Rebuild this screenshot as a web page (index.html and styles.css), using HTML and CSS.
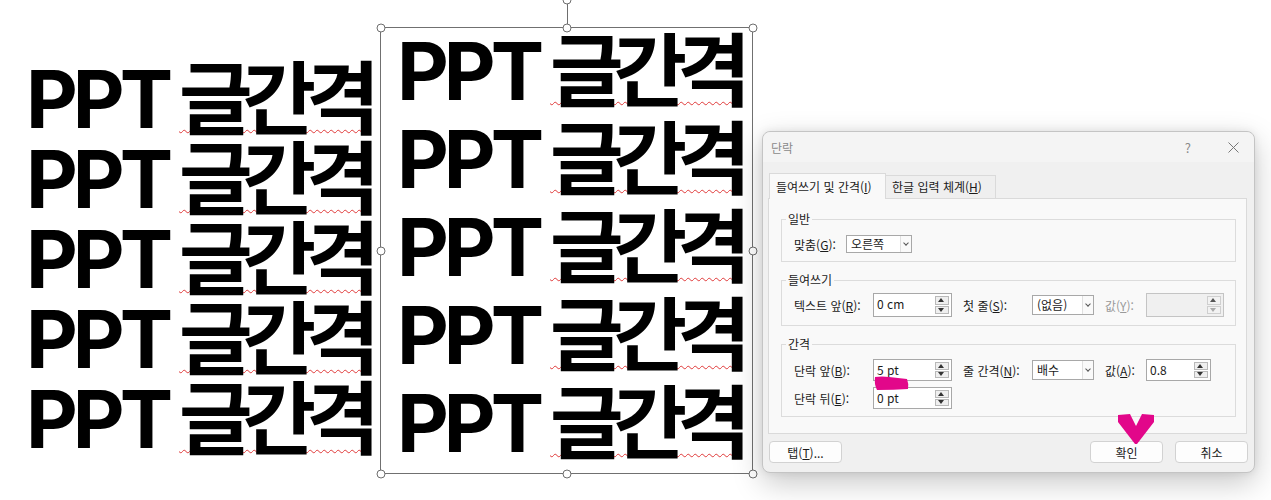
FILE: index.html
```html
<!DOCTYPE html>
<html lang="ko">
<head>
    <meta charset="UTF-8">
    <title>PPT 글간격</title>
    <link rel="stylesheet" href="styles.css">
</head>
<body>
    <div class="stage">
        <!-- plain text on the slide -->
        <div class="lines lines-plain">
            <p class="line">PPT <span class="spell">글간격</span></p>
            <p class="line">PPT <span class="spell">글간격</span></p>
            <p class="line">PPT <span class="spell">글간격</span></p>
            <p class="line">PPT <span class="spell">글간격</span></p>
            <p class="line">PPT <span class="spell">글간격</span></p>
        </div>

        <!-- selected text box -->
        <div class="textbox">
            <div class="lines lines-box">
                <p class="line">PPT <span class="spell">글간격</span></p>
                <p class="line">PPT <span class="spell">글간격</span></p>
                <p class="line">PPT <span class="spell">글간격</span></p>
                <p class="line">PPT <span class="spell">글간격</span></p>
                <p class="line">PPT <span class="spell">글간격</span></p>
            </div>
            <span class="rotate-line"></span>
            <span class="handle h-rot"></span>
            <span class="handle h-tl"></span>
            <span class="handle h-tc"></span>
            <span class="handle h-tr"></span>
            <span class="handle h-ml"></span>
            <span class="handle h-mr"></span>
            <span class="handle h-bl"></span>
            <span class="handle h-bc"></span>
            <span class="handle h-br"></span>
        </div>

        <!-- paragraph dialog -->
        <div class="dialog">
            <div class="titlebar">
                <span class="title">단락</span>
                <span class="help">?</span>
                <svg class="close" width="11" height="11" viewBox="0 0 11 11">
                    <path d="M0.5 0.5 L10.5 10.5 M10.5 0.5 L0.5 10.5" stroke="#777" stroke-width="1" fill="none"/>
                </svg>
            </div>

            <div class="tabs">
                <div class="tab active">들여쓰기 및 간격(<u>I</u>)</div>
                <div class="tab">한글 입력 체계(<u>H</u>)</div>
            </div>

            <div class="panel">
                <div class="group group-general">
                    <div class="group-title">일반</div>
                    <div class="row">
                        <span class="lbl lbl-align">맞춤(<u>G</u>):</span>
                        <div class="select sel-align">오른쪽<span class="caret"></span></div>
                    </div>
                </div>

                <div class="group group-indent">
                    <div class="group-title">들여쓰기</div>
                    <div class="row row-tall">
                        <span class="lbl lbl-1">텍스트 앞(<u>R</u>):</span>
                        <div class="spin">0 cm<span class="spin-btns"><i class="up"></i><i class="down"></i></span></div>
                        <span class="lbl lbl-2">첫 줄(<u>S</u>):</span>
                        <div class="select sel-mid">(없음)<span class="caret"></span></div>
                        <span class="lbl lbl-3 disabled">값(<u>Y</u>):</span>
                        <div class="spin spin-disabled"><span class="spin-btns"><i class="up"></i><i class="down"></i></span></div>
                    </div>
                </div>

                <div class="group group-spacing">
                    <div class="group-title">간격</div>
                    <div class="row">
                        <span class="lbl lbl-1">단락 앞(<u>B</u>):</span>
                        <div class="spin">5 pt<span class="spin-btns"><i class="up"></i><i class="down"></i></span></div>
                        <span class="lbl lbl-2">줄 간격(<u>N</u>):</span>
                        <div class="select sel-mid">배수<span class="caret"></span></div>
                        <span class="lbl lbl-3">값(<u>A</u>):</span>
                        <div class="spin spin-short">0.8<span class="spin-btns"><i class="up"></i><i class="down"></i></span></div>
                    </div>
                    <div class="row row-second">
                        <span class="lbl lbl-1">단락 뒤(<u>E</u>):</span>
                        <div class="spin">0 pt<span class="spin-btns"><i class="up"></i><i class="down"></i></span></div>
                    </div>
                </div>
            </div>

            <div class="buttons">
                <button class="btn">탭(<u>T</u>)...</button>
                <span class="spacer"></span>
                <button class="btn">확인</button>
                <button class="btn">취소</button>
            </div>

            <!-- pink annotation marks -->
            <svg class="mark mark-stroke" width="36" height="16" viewBox="0 0 36 16">
                <path d="M1 1 Q8 0 15 1 L33 3 Q35 8 34 13 Q20 14 3 14 Q0 8 1 1 Z" fill="#e2078a"/>
            </svg>
            <svg class="mark mark-chevron" width="38" height="32" viewBox="0 0 38 32">
                <polygon points="1,2 13,1 19,13 25,1 37,2 37,9 20,31 18,31 1,9" fill="#e2078a"/>
            </svg>
        </div>
    </div>
</body>
</html>
```

FILE: styles.css
```css
body {
    margin: 0;
    background: #ffffff;
    font-family: "Noto Sans CJK KR", "Noto Sans", sans-serif;
    overflow: hidden;
}

.stage {
    display: flex;
    align-items: flex-start;
    width: 1271px;
    height: 500px;
    overflow: hidden;
}

/* slide text */
.lines {
    font-family: Inter, "Noto Sans CJK KR", sans-serif;
    font-weight: 700;
    font-size: 80px;
    color: #000000;
    letter-spacing: -5px;
    word-spacing: -3px;
    white-space: nowrap;
}

.line {
    margin: 0;
}

.lines-plain {
    flex: none;
    width: 354px;
    min-width: 0;
    padding: 59px 0 0 26px;
    line-height: 80px;
}

.lines-box {
    padding: 0 0 0 16px;
    line-height: 88px;
    margin-top: -1px;
}

.spell {
    letter-spacing: -10px;
    text-decoration: underline wavy #e03a3a;
    text-decoration-thickness: 1px;
    text-underline-offset: 1px;
}

.textbox {
    position: relative;
    flex: none;
    box-sizing: border-box;
    width: 373px;
    height: 447px;
    margin-top: 27px;
    border: 1px solid #707070;
}

.handle {
    position: absolute;
    width: 9px;
    height: 9px;
    box-sizing: border-box;
    border: 1.5px solid #6e6e6e;
    border-radius: 50%;
    background: #ffffff;
    transform: translate(-50%, -50%);
}

.h-tl { left: -0.5px; top: -0.5px; }
.h-tc { left: 50%; top: -0.5px; }
.h-tr { left: calc(100% + 0.5px); top: -0.5px; }
.h-ml { left: -0.5px; top: 50%; }
.h-mr { left: calc(100% + 0.5px); top: 50%; }
.h-bl { left: -0.5px; top: calc(100% + 0.5px); }
.h-bc { left: 50%; top: calc(100% + 0.5px); }
.h-br { left: calc(100% + 0.5px); top: calc(100% + 0.5px); }
.h-rot { left: 50%; top: -28px; }

.rotate-line {
    position: absolute;
    left: 50%;
    top: -27px;
    width: 1px;
    height: 27px;
    background: #6e6e6e;
}

/* dialog window */
.dialog {
    position: relative;
    flex: none;
    box-sizing: border-box;
    width: 493px;
    height: 342px;
    margin: 131px 0 0 9px;
    border: 1px solid #c4c4c4;
    border-radius: 8px;
    background: #f0f0f0;
    box-shadow: 0 10px 30px rgba(0, 0, 0, 0.22), 0 0 8px rgba(0, 0, 0, 0.08);
    font-size: 12px;
    color: #1b1b1b;
}

.titlebar {
    display: flex;
    align-items: center;
    height: 30px;
    padding: 0 15px 0 8px;
    background: #f4f4f4;
    border-radius: 8px 8px 0 0;
}

.title {
    color: #8a8a8a;
    flex: 1;
}

.help {
    color: #8a8a8a;
    font-size: 13px;
    margin-right: 37px;
}

.tabs {
    display: flex;
    align-items: flex-end;
    height: 36px;
    padding-left: 6px;
}

.tab {
    box-sizing: border-box;
    height: 23px;
    line-height: 22px;
    padding: 0 6px;
    background: #efefef;
    border: 1px solid #dadada;
    border-bottom: none;
    border-left: none;
    white-space: nowrap;
}

.tab.active {
    height: 26px;
    line-height: 26px;
    margin-bottom: -1px;
    position: relative;
    border-left: 1px solid #dadada;
    background: #f9f9f9;
    width: 117px;
}

.tab:not(.active) {
    width: 110px;
}

u {
    text-decoration: underline;
    text-underline-offset: 1px;
}

.panel {
    box-sizing: border-box;
    height: 236px;
    margin: 0 7px 0 5px;
    padding: 20px 10px 0 12px;
    background: #f9f9f9;
    border: 1px solid #dadada;
}

.group {
    border: 1px solid #dcdcdc;
    padding: 0 0 8px 12px;
}

.group + .group {
    margin-top: 18px;
}

.group-title {
    display: table;
    height: 16px;
    line-height: 16px;
    margin: -9px 0 0 -8px;
    padding: 0 2px;
    background: #f9f9f9;
}

.row {
    display: flex;
    align-items: center;
    height: 22px;
    margin-top: 7px;
}

.group-general .row {
    height: 18px;
    margin-top: 8px;
}

.row-tall {
    height: 24px;
    margin-top: 5px;
}

.row-second {
    margin-top: 6px;
}

.group-spacing {
    padding-bottom: 7px;
}

.lbl {
    white-space: nowrap;
}

.lbl-align { width: 52px; }
.lbl-1 { width: 79px; }
.lbl-2 { width: 69px; margin-left: 11px; }
.lbl-3 { width: 41px; margin-left: 11px; }

.disabled {
    color: #9a9a9a;
}

.select {
    position: relative;
    box-sizing: border-box;
    height: 20px;
    line-height: 18px;
    padding-left: 4px;
    background: #ffffff;
    border: 1px solid #a8a8a8;
}

.sel-align {
    width: 66px;
    height: 18px;
    line-height: 16px;
}

.sel-mid {
    width: 62px;
}

.caret {
    position: absolute;
    right: 0;
    top: 0;
    bottom: 0;
    width: 10px;
    border-left: 1px solid #e0e0e0;
    background: #fafafa;
}

.caret::after {
    content: "";
    position: absolute;
    left: 3px;
    top: 50%;
    width: 3px;
    height: 3px;
    margin-top: -3px;
    border-right: 1px solid #555;
    border-bottom: 1px solid #555;
    transform: rotate(45deg);
}

.spin {
    position: relative;
    box-sizing: border-box;
    width: 79px;
    height: 100%;
    line-height: 20px;
    padding-left: 3px;
    background: #ffffff;
    border: 1px solid #a8a8a8;
}

.spin-short {
    width: 65px;
}

.spin-disabled {
    width: 78px;
    background: #f0f0f0;
    border-color: #c4c4c4;
}

.spin-btns {
    position: absolute;
    right: 2px;
    top: 2px;
    bottom: 2px;
    width: 14px;
    display: flex;
    flex-direction: column;
    gap: 1px;
}

.spin-btns i {
    position: relative;
    flex: 1;
    box-sizing: border-box;
    border: 1px solid #b9b9b9;
    background: #efefef;
}

.spin-btns i::after {
    content: "";
    position: absolute;
    left: 50%;
    top: 50%;
    margin: -2px 0 0 -4px;
    border-left: 3.5px solid transparent;
    border-right: 3.5px solid transparent;
}

.spin-btns .up::after {
    border-bottom: 4px solid #333;
}

.spin-btns .down::after {
    border-top: 4px solid #333;
}

.spin-disabled .spin-btns i {
    border-color: #cfcfcf;
    background: #f2f2f2;
}

.spin-disabled .spin-btns .up::after {
    border-bottom-color: #555;
}

.spin-disabled .spin-btns .down::after {
    border-top-color: #aaa;
}

.buttons {
    display: flex;
    gap: 12px;
    padding: 7px 6px 0 6px;
}

.spacer {
    flex: 1;
}

.btn {
    box-sizing: border-box;
    width: 73px;
    height: 22px;
    padding: 0;
    font-family: "Noto Sans CJK KR", "Noto Sans", sans-serif;
    font-size: 12px;
    color: #1b1b1b;
    background: #fdfdfd;
    border: 1px solid #d2d2d2;
    border-radius: 4px;
}

.mark {
    position: absolute;
}

.mark-stroke {
    left: 111px;
    top: 244px;
}

.mark-chevron {
    left: 354px;
    top: 281px;
}
```
